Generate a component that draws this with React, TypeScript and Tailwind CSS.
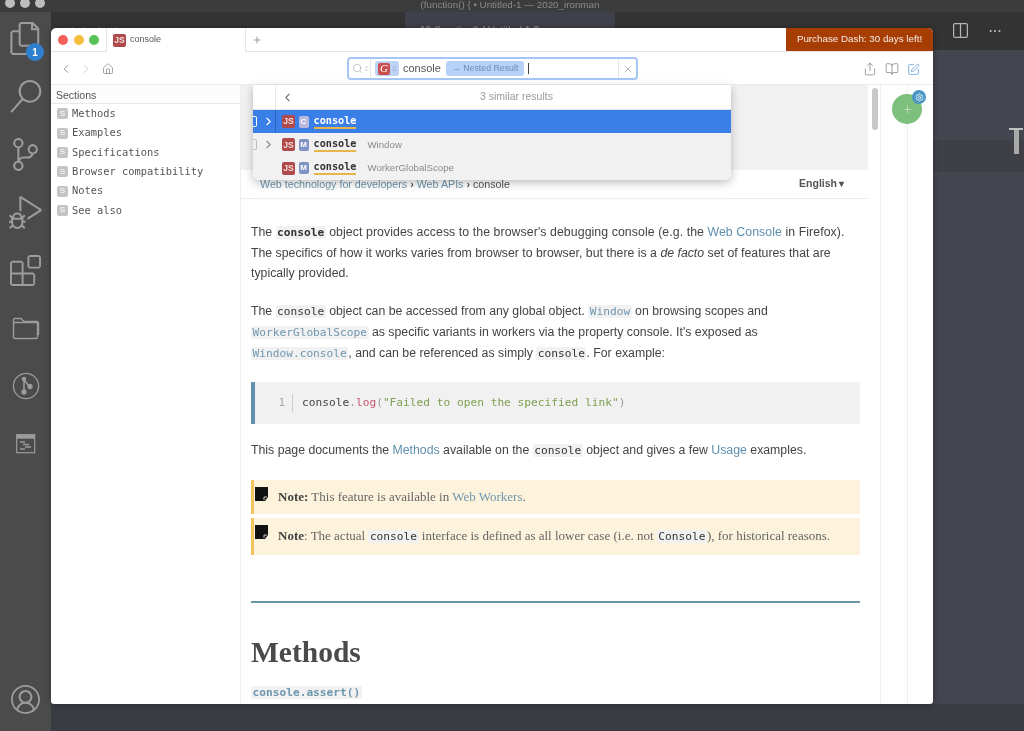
import React from "react";
import { VscFiles, VscSearch, VscSourceControl, VscDebugAlt, VscExtensions, VscAccount } from "react-icons/vsc";
import { ChevronLeft, ChevronRight, Plus, X, Search, Share, BookOpen, SquarePen, Settings, Home, ChevronsUpDown } from "lucide-react";

const sans = "font-['Liberation_Sans',sans-serif]";
const mono = "font-['DejaVu_Sans_Mono',monospace]";
const slab = "font-['Liberation_Serif',serif]";

function FolderIcon() {
  return (
    <svg width="28" height="24" viewBox="0 0 28 24" fill="none" stroke="currentColor" strokeWidth="1.4">
      <path d="M1.5 8V21a1.5 1.5 0 0 0 1.5 1.5h21a1.5 1.5 0 0 0 1.5-1.5V8a1.5 1.5 0 0 0-1.5-1.5H3A1.5 1.5 0 0 0 1.5 8z" />
      <path d="M1.5 8V4A1.5 1.5 0 0 1 3 2.5h6L12 5.5h13a1.5 1.5 0 0 1 1.5 1.5v12" />
    </svg>
  );
}
function GraphIcon() {
  return (
    <svg width="28" height="28" viewBox="0 0 28 28" fill="none" stroke="currentColor" strokeWidth="1.3">
      <circle cx="14" cy="14" r="12.6" />
      <path d="M12 7.5 L12 20 M12 8 L17.5 14.5" strokeWidth="1.5" />
      <circle cx="12" cy="7" r="1.6" fill="currentColor" />
      <circle cx="12" cy="20" r="2" fill="currentColor" />
      <circle cx="18" cy="14.5" r="2" fill="currentColor" />
    </svg>
  );
}
function TerminalIcon() {
  return (
    <svg width="20" height="20" viewBox="0 0 20 20" fill="none">
      <rect x="0.7" y="0.7" width="18" height="18" stroke="currentColor" strokeWidth="1.2" />
      <rect x="0.7" y="0.7" width="18" height="4" fill="currentColor" />
      <path d="M4 8h5M7 10.5h6M9 13h6M4 15h5" stroke="currentColor" strokeWidth="1.3" />
    </svg>
  );
}

function Rail() {
  const items = [
    <VscFiles key="a" size={33} />,
    <VscSearch key="b" size={33} />,
    <VscSourceControl key="c" size={33} />,
    <VscDebugAlt key="d" size={33} />,
    <VscExtensions key="e" size={31} />,
    <FolderIcon key="f" />,
    <GraphIcon key="g" />,
    <TerminalIcon key="h" />,
  ];
  return (
    <div className="w-[51px] shrink-0 bg-[#4b4b4b] text-[#9c9c9c] flex flex-col items-center">
      {items.map((it, i) => (
        <div key={i} className={"h-[58px] w-full flex items-center justify-center relative " + (i === 0 ? "-mt-[3px]" : "")}>
          {it}
          {i === 0 && (
            <span className={"absolute left-[26px] top-[34px] w-[18px] h-[18px] rounded-full bg-[#2f80cf] text-white text-[10px] font-bold flex items-center justify-center " + sans}>1</span>
          )}
        </div>
      ))}
      <div className="mt-auto h-[47px] flex items-start justify-center pt-[1px]">
        <VscAccount size={29} />
      </div>
    </div>
  );
}

function JsBadge() {
  return <span className={"w-[13px] h-[13px] rounded-[2px] bg-[#b04a4a] text-[#f4dede] text-[8.5px] font-bold flex items-center justify-center shrink-0 " + sans}>JS</span>;
}
function KindBadge({ k, active }: { k: string; active?: boolean }) {
  return (
    <span className={"w-[10px] h-[12px] rounded-[2px] text-white text-[8px] font-bold flex items-center justify-center shrink-0 " + sans + " " + (active ? "bg-[#b9b9e0]" : "bg-[#7f93c4]")}>{k}</span>
  );
}

function PopRow({ k, active, extra, toggle }: { k: string; active?: boolean; extra?: string; toggle?: boolean }) {
  return (
    <div className={"flex h-[23.3px] items-center " + (active ? "bg-[#3a7ee8]" : "bg-[#f1f1f1]")}>
      <div className={"w-[23px] h-full flex items-center shrink-0 border-r " + (active ? "border-[#2a63bd]" : "border-transparent")}>
        {toggle && (
          <>
            <span className={"w-[4px] h-[11px] border border-l-0 rounded-r-[2px] " + (active ? "border-white" : "border-[#bdbdbd]")} />
            <ChevronRight size={13} className={"ml-[5px] " + (active ? "text-white" : "text-[#888]")} />
          </>
        )}
      </div>
      <div className="pl-[6px] flex items-center gap-[3.5px]">
        <JsBadge />
        <KindBadge k={k} active={active} />
      </div>
      <span className={"ml-[5px] text-[10.2px] font-bold border-b-2 border-[#e8b548] leading-[12px] " + mono + " " + (active ? "text-white" : "text-[#333]")}>console</span>
      {extra && <span className={"ml-[11px] text-[9.7px] text-[#8a8a8a] " + sans}>{extra}</span>}
    </div>
  );
}

function Popup() {
  return (
    <div className="absolute left-[202px] top-0 w-[478px] rounded-b-[6px] overflow-hidden shadow-[0_3px_10px_rgba(0,0,0,0.25)] bg-white z-10">
      <div className="flex h-[25px] items-center border-b border-[#e4e4e4]">
        <div className="w-[23px] h-full border-r border-[#e8e8e8] shrink-0" />
        <ChevronLeft size={13} className="ml-[5px] text-[#777]" />
        <span className={"flex-1 text-center text-[10.5px] text-[#999] pl-[8px] " + sans}>3 similar results</span>
      </div>
      <PopRow k="C" active toggle />
      <PopRow k="M" extra="Window" toggle />
      <PopRow k="M" extra="WorkerGlobalScope" />
    </div>
  );
}

function Code({ children, bold, link }: { children: React.ReactNode; bold?: boolean; link?: boolean }) {
  return (
    <code className={"bg-[#f1f1f1] rounded-[2px] px-[1.5px] text-[11.2px] leading-none " + mono + " " + (bold ? "font-bold " : "") + (link ? "text-[#6f97b0]" : "text-[#333]")}>{children}</code>
  );
}

function A({ children }: { children: React.ReactNode }) {
  return <span className="text-[#5e8fae]">{children}</span>;
}

function NoteIcon() {
  return (
    <svg width="13" height="14" viewBox="0 0 13 14" className="absolute left-[1px] top-[7px]">
      <path d="M0 0H13V10L10 14H0Z" fill="#111" />
      <path d="M9 13V10H12" fill="none" stroke="#fff5e0" strokeWidth="0.8" />
    </svg>
  );
}

function Note({ children, h, pt }: { children: React.ReactNode; h: string; pt: string }) {
  return (
    <div className={"relative bg-[#fdf3dc] border-l-[3px] border-[#f2c35f] pl-[24px] text-[#666] text-[13px] leading-[18px] whitespace-nowrap " + slab + " " + h + " " + pt}>
      <NoteIcon />
      {children}
    </div>
  );
}

function Article() {
  return (
    <div className={"flex-1 min-w-0 h-full overflow-hidden " + sans}>
      <div className="h-[85px] bg-[#f1f1f1]" />
      <div className="h-[29px] border-b border-[#eeeeee] flex items-center justify-between pl-[19px] pr-[24px] text-[10.7px]">
        <span>
          <span className="text-[#6f97b0]">Web technology for developers</span>
          <span className="text-[#555] font-bold mx-[3px]">›</span>
          <span className="text-[#6f97b0]">Web APIs</span>
          <span className="text-[#555] font-bold mx-[3px]">›</span>
          <span className="text-[#555]">console</span>
        </span>
        <span className="text-[#555] font-bold text-[10.5px]">English<span className="text-[10px] ml-[2px]">▾</span></span>
      </div>
      <div className="pl-[10px] pr-[8px] text-[#444] text-[12.3px] leading-[20.7px]">
        <p className="mt-[23px]">
          The <Code bold>console</Code> <span className="tracking-[0.08px]">object provides access to the browser's debugging console (e.g. the <A>Web Console</A> in Firefox).</span>{" "}
          The specifics of how it works varies from browser to browser, but there is a <em>de facto</em> set of features that are typically provided.
        </p>
        <p className="mt-[17px]">
          The <Code>console</Code> object can be accessed from any global object. <Code link>Window</Code> on browsing scopes and{" "}
          <Code link>WorkerGlobalScope</Code> as specific variants in workers via the property console. It's exposed as{" "}
          <Code link>Window.console</Code>, and can be referenced as simply <Code>console</Code>. For example:
        </p>
        <div className="mt-[19px] h-[42px] bg-[#f1f1f1] border-l-[4px] border-[#5f93ab] flex items-center">
          <span className={"w-[30px] text-right text-[11px] text-[#aaa] " + mono}>1</span>
          <span className="w-px h-[18px] bg-[#ccc] ml-[7px] mr-[9px]" />
          <span className={"text-[11.2px] " + mono}>
            <span className="text-[#444]">console</span>
            <span className="text-[#999]">.</span>
            <span className="text-[#c2566d]">log</span>
            <span className="text-[#999]">(</span>
            <span className="text-[#7fa052]">"Failed to open the specified link"</span>
            <span className="text-[#999]">)</span>
          </span>
        </div>
        <p className="mt-[16px]">
          This page documents the <A>Methods</A> available on the <Code>console</Code> object and gives a few <A>Usage</A> examples.
        </p>
        <div className="mt-[19px] flex flex-col gap-[4px]">
          <Note h="h-[34px]" pt="pt-[8px]">
            <b className="text-[#444]">Note:</b> This feature is available in <span className="text-[#6f97b0]">Web Workers</span>.
          </Note>
          <Note h="h-[37px]" pt="pt-[9px]">
            <b className="text-[#444]">Note</b>: The actual <Code>console</Code> interface is defined as all lower case (i.e. not <Code>Console</Code>), for historical reasons.
          </Note>
        </div>
        <div className="mt-[46px] h-[2px] bg-[#6a94a8]" />
        <h2 className={"mt-[31px] text-[29.5px] font-bold text-[#4a4a4a] leading-[36px] " + slab}>Methods</h2>
        <div className="mt-[12px]">
          <code className={"bg-[#f1f1f1] rounded-[2px] px-[1.5px] text-[11.2px] font-bold text-[#6f97b0] " + mono}>console.assert()</code>
        </div>
      </div>
    </div>
  );
}

function Sidebar() {
  const items = ["Methods", "Examples", "Specifications", "Browser compatibility", "Notes", "See also"];
  return (
    <div className="w-[190px] shrink-0 border-r border-[#eeeeee] h-full">
      <div className={"h-[19px] border-b border-[#e8e8e8] bg-[#fcfcfc] pl-[5px] text-[10.5px] leading-[20px] text-[#555] " + sans}>Sections</div>
      <div>
        {items.map((t) => (
          <div key={t} className="h-[19.35px] flex items-center pl-[6px] gap-[4px]">
            <span className={"w-[11px] h-[11px] rounded-[2px] bg-[#c4c4c4] text-white text-[8px] flex items-center justify-center " + sans}>S</span>
            <span className={"text-[10.4px] text-[#555] " + mono}>{t}</span>
          </div>
        ))}
      </div>
    </div>
  );
}

function DashWindow() {
  return (
    <div className="absolute left-[51px] top-[28px] w-[882px] h-[676px] bg-white rounded-t-[5px] rounded-b-[3px] overflow-hidden flex flex-col shadow-[0_0_6px_rgba(0,0,0,0.3)]">
      <div className={"h-[24px] flex shrink-0 border-b border-[#e6e6e6] relative " + sans}>
        <div className="w-[55px] flex items-center gap-[5.5px] pl-[7px] shrink-0">
          <span className="w-[10px] h-[10px] rounded-full bg-[#f2605a]" />
          <span className="w-[10px] h-[10px] rounded-full bg-[#f5bd3c]" />
          <span className="w-[10px] h-[10px] rounded-full bg-[#58c257]" />
        </div>
        <div className="w-[140px] h-[24px] bg-white border-x border-[#e6e6e6] flex items-center pl-[6px] gap-[4px] shrink-0">
          <JsBadge />
          <span className="text-[9px] text-[#555]">console</span>
        </div>
        <div className="flex items-center pl-[6px] flex-1 text-[#888]"><Plus size={10} /></div>
        <div className="w-[147px] bg-[#a83d04] text-white/90 text-[9.8px] flex items-center justify-center shrink-0">Purchase Dash: 30 days left!</div>
      </div>
      <div className={"h-[33px] flex items-center shrink-0 border-b border-[#ececec] relative " + sans}>
        <div className="flex items-center pl-[8px] text-[#777] pt-[1px]">
          <ChevronLeft size={14} strokeWidth={1.3} />
          <ChevronRight size={14} strokeWidth={1.3} className="ml-[6px] text-[#bbb]" />
          <Home size={12} strokeWidth={1.3} className="ml-[9px]" />
        </div>
        <div className="absolute left-[296px] top-[5px] w-[291px] h-[23px] rounded-[4px] border-2 border-[#a6c7f5] bg-white flex items-center">
          <div className="w-[22px] h-full border-r border-[#e6e6e6] flex items-center pl-[3px] text-[#aaa] shrink-0">
            <Search size={11} strokeWidth={1.4} />
            <ChevronsUpDown size={7} />
          </div>
          <div className="ml-[4px] w-[24px] h-[15px] rounded-[3px] bg-[#bcd3f5] flex items-center pl-[3px] gap-[1px] shrink-0">
            <span className={"w-[12px] h-[12px] rounded-[2px] bg-[#c9504f] text-white text-[11px] italic flex items-center justify-center " + slab}>G</span>
            <ChevronsUpDown size={7} className="text-[#7d8ba0]" />
          </div>
          <span className="ml-[4px] text-[11px] text-[#555]">console</span>
          <span className="ml-[5px] h-[15px] px-[6px] rounded-[3px] bg-[#b7d1f9] text-[#6f8cb6] text-[8.8px] flex items-center whitespace-nowrap">→ Nested Result</span>
          <span className="ml-[4px] w-px h-[11px] bg-[#444]" />
          <div className="ml-auto w-[18px] h-full border-l border-[#e6e6e6] flex items-center justify-center text-[#888] shrink-0"><X size={12} strokeWidth={1.2} /></div>
        </div>
        <div className="ml-auto flex items-center gap-[8px] pr-[13px] pt-[2px] text-[#777]">
          <Share size={14} strokeWidth={1.2} />
          <BookOpen size={14} strokeWidth={1.2} />
          <SquarePen size={13} strokeWidth={1.4} className="text-[#5b9bd5]" />
        </div>
      </div>
      <div className="flex-1 min-h-0 flex relative">
        <Sidebar />
        <Article />
        <div className="w-[13px] shrink-0 h-full border-r border-[#eeeeee] pl-[4px] pt-[3px]">
          <div className="w-[6px] h-[42px] rounded-full bg-[#c8c8c8]" />
        </div>
        <div className="w-[52px] shrink-0 h-full relative flex justify-center">
          <div className="w-px h-full bg-[#eeeeee]" />
          <div className="absolute left-[11px] top-[9px] w-[30px] h-[30px] rounded-full bg-[#7dbf7d] flex items-center justify-center text-white/80"><Plus size={13} strokeWidth={1} /></div>
          <div className="absolute left-[31px] top-[5px] w-[14px] h-[14px] rounded-full bg-[#4b97c4] flex items-center justify-center text-white"><Settings size={9} /></div>
        </div>
        <Popup />
      </div>
    </div>
  );
}

export default function App() {
  return (
    <div className={"w-[1024px] h-[731px] relative overflow-hidden bg-[#43454f] flex flex-col blur-[0.5px] " + sans}>
      <div className="h-[12px] bg-[#3c3c3c] shrink-0 relative overflow-hidden flex items-center justify-center">
        <div className="absolute left-[5px] top-[-2px] flex gap-[5px]">
          <span className="w-[10px] h-[10px] rounded-full bg-[#bdbdbd]" />
          <span className="w-[10px] h-[10px] rounded-full bg-[#bdbdbd]" />
          <span className="w-[10px] h-[10px] rounded-full bg-[#bdbdbd]" />
        </div>
        <span className="text-[9.8px] leading-[10px] text-[#8a8a8a] -mt-[3px] -ml-[4px]">(function() {"{"} • Untitled-1 — 2020_ironman</span>
      </div>
      <div className="flex-1 min-h-0 flex">
        <Rail />
        <div className="flex-1 min-w-0 flex flex-col">
          <div className="h-[38px] bg-[#333333] flex shrink-0">
            <div className="w-[354px] pl-[20px] pt-[12px] text-[10px] text-[#777] overflow-hidden">index.html</div>
            <div className="w-[210px] bg-[#3e404b] pl-[15px] pt-[11px] text-[10px] text-[#999]">10 (function() {"{"} Untitled-1 ?</div>
            <div className="flex-1 flex items-center justify-end text-[#b5b5b5] pr-[22px] gap-[21px] pb-[1px]">
              <svg width="15" height="15" viewBox="0 0 15 15" fill="none" stroke="currentColor" strokeWidth="1.2"><rect x="0.6" y="0.6" width="13.8" height="13.8" rx="1.5" /><path d="M7.5 0.6V14.4" /></svg>
              <span className="tracking-[1px] font-bold text-[12px] leading-none -mt-[6px]">...</span>
            </div>
          </div>
          <div className="flex-1 relative">
            <div className="mt-[90px] h-[32px] bg-[#3f4046]" />
            <div className="absolute right-[1px] top-[78px] w-[14px] h-[26px] flex flex-col items-center">
              <div className="w-[14px] h-[2px] bg-[#c0c0c0]" />
              <div className="w-[5px] h-[24px] bg-[#a8a8a8]" />
            </div>
          </div>
          <div className="h-[27px] bg-[#3a3c44] shrink-0" />
        </div>
      </div>
      <DashWindow />
    </div>
  );
}
